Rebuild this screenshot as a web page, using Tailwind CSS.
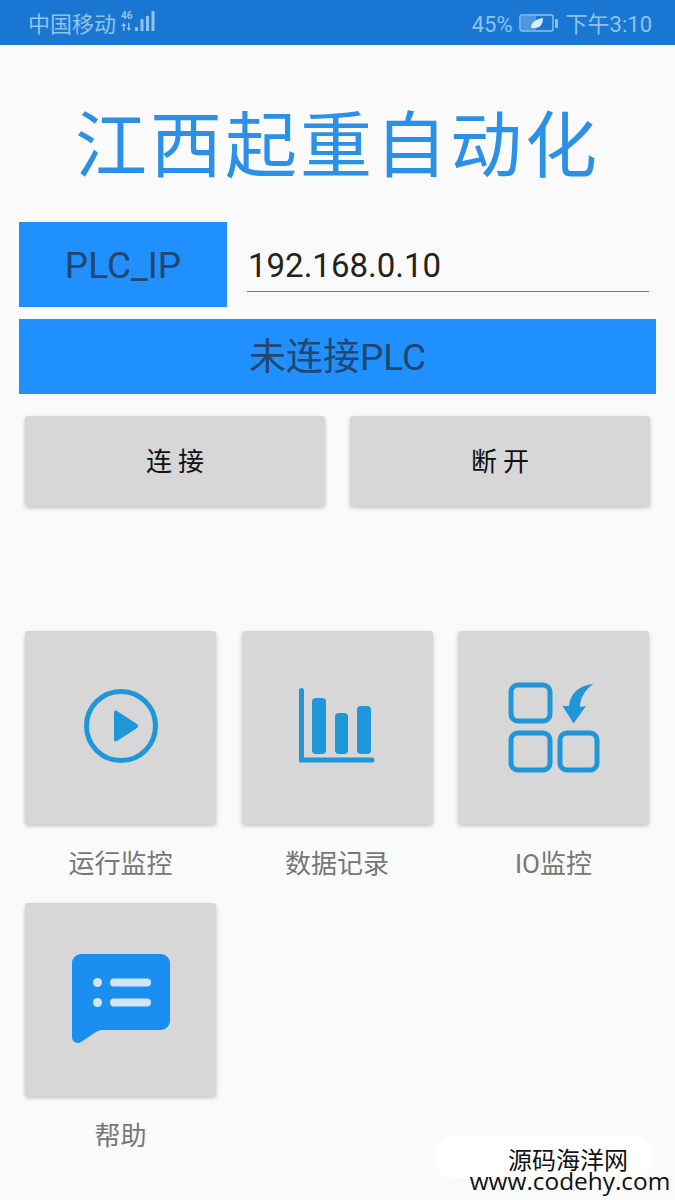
<!DOCTYPE html>
<html lang="zh">
<head>
<meta charset="utf-8">
<script src="https://cdn.jsdelivr.net/npm/@tailwindcss/browser@4"></script>
</head>
<body class="m-0">
<div class="relative w-[675px] h-[1200px] overflow-hidden bg-[#fafafa] font-['Roboto','Noto_Sans_CJK_SC',sans-serif]">
  <div class="h-[45px] bg-[#1976d2] flex items-center justify-between pl-[28px] pr-[23px] pt-[3px] text-[#8fc3ee] text-[22px]">
    <div class="flex items-center gap-[5px]">
      <span>中国移动</span>
      <svg class="mt-[-3px]" width="34" height="24" viewBox="0 0 34 24" fill="#8fc3ee">
        <text x="0" y="8" font-size="10" font-weight="700" font-family="Roboto">46</text>
        <path d="M2 13h1.500v7H2zM0 15l2.700-3 2.700 3zM7 12h1.500v6H7zM5.500 17h4.500l-2.200 3z"/>
        <rect x="14" y="16" width="3" height="4"/><rect x="19.500" y="8" width="3" height="12"/><rect x="25" y="5" width="3" height="15"/><rect x="30.500" y="0" width="3" height="20"/>
      </svg>
    </div>
    <div class="flex items-center">
      <span>45%</span>
      <svg class="ml-[6px] mr-[8px] mt-[-2px]" width="39" height="20" viewBox="0 0 39 20">
        <rect x="1" y="2" width="33" height="16" rx="2" fill="none" stroke="#8fc3ee" stroke-width="1.4"/>
        <rect x="2" y="3" width="15" height="14" fill="#8fc3ee" fill-opacity=".45"/>
        <rect x="36" y="6" width="3" height="9" rx="1" fill="#8fc3ee"/>
        <path d="M12 15c0-6 5-9 12-10 0 6-3 10-8 10z" fill="#dcecf8"/>
      </svg>
      <span>下午3:10</span>
    </div>
  </div>

  <h1 class="mt-[59px] text-center text-[#2b90e8] text-[72px] leading-[86px] tracking-[3px] font-normal">江西起重自动化</h1>

  <div class="mt-[32px] flex pl-[19px] pr-[26px]">
    <div class="w-[208px] h-[85px] pt-[2px] bg-[#2090ff] flex items-center justify-center text-[#24466c] text-[37px]">PLC_IP</div>
    <div class="ml-[20px] flex-1 h-[70px] border-b border-[#777777] flex items-center pl-[1px] pt-[18px] text-[#222222] text-[33px]">192.168.0.10</div>
  </div>

  <div class="mt-[12px] mx-[19px] h-[75px] pt-[2px] bg-[#2090ff] flex items-center justify-center text-[#24466c] text-[37px]">未连接PLC</div>

  <div class="mt-[22px] mx-[25px] flex justify-between">
    <button class="w-[300px] h-[90px] rounded-[3px] bg-[#d7d7d7] shadow-[0_2px_4px_rgba(0,0,0,0.22)] text-[#111111] text-[26px] tracking-[6px] pl-[6px] pt-[2px]">连接</button>
    <button class="w-[300px] h-[90px] rounded-[3px] bg-[#d7d7d7] shadow-[0_2px_4px_rgba(0,0,0,0.22)] text-[#111111] text-[26px] tracking-[6px] pl-[6px] pt-[2px]">断开</button>
  </div>

  <div class="mt-[125px] ml-[25px] grid grid-cols-[191px_191px_191px] gap-x-[25.500px] gap-y-[23px]">
    <div class="flex flex-col items-center">
      <div class="w-[191px] h-[193px] rounded-[3px] bg-[#d7d7d7] shadow-[0_2px_4px_rgba(0,0,0,0.22)] flex items-center justify-center">
        <svg width="74" height="74" viewBox="0 0 74 74" class="mt-[-3px]">
          <circle cx="37" cy="37" r="34.500" fill="none" stroke="#1f96d8" stroke-width="5"/>
          <path d="M30 23.500c0-2 1.500-2.500 3-1.500l20 13c1.500 1 1.500 3 0 4l-20 13c-1.500 1-3 .5-3-1.500z" fill="#1f96d8"/>
        </svg>
      </div>
      <div class="mt-[25px] h-[31px] leading-[31px] text-[#777777] text-[26px]">运行监控</div>
    </div>
    <div class="flex flex-col items-center">
      <div class="w-[191px] h-[193px] rounded-[3px] bg-[#d7d7d7] shadow-[0_2px_4px_rgba(0,0,0,0.22)] flex items-center justify-center">
        <svg width="76" height="76" viewBox="0 0 76 76" class="mt-[-3px]">
          <path d="M2.500 2.500V72H73" fill="none" stroke="#1f96d8" stroke-width="5" stroke-linecap="round"/>
          <rect x="13" y="10" width="14" height="56" rx="4" fill="#1f96d8"/>
          <rect x="36" y="25" width="13" height="41" rx="4" fill="#1f96d8"/>
          <rect x="58" y="18" width="14" height="48" rx="4" fill="#1f96d8"/>
        </svg>
      </div>
      <div class="mt-[25px] h-[31px] leading-[31px] text-[#777777] text-[26px]">数据记录</div>
    </div>
    <div class="flex flex-col items-center">
      <div class="w-[191px] h-[193px] rounded-[3px] bg-[#d7d7d7] shadow-[0_2px_4px_rgba(0,0,0,0.22)] flex items-center justify-center">
        <svg width="92" height="92" viewBox="0 0 92 92" class="mt-[-2px]">
          <g fill="none" stroke="#1f96d8" stroke-width="5">
            <rect x="3" y="4" width="39" height="36" rx="7"/>
            <rect x="3" y="52" width="39" height="37" rx="7"/>
            <rect x="52" y="52" width="37" height="37" rx="7"/>
          </g>
          <path d="M85.500 3C72 4 62 12 61 25H54.500L65.500 42.500 78 25 72 26C72 17 77 9 85.500 3z" fill="#1f96d8"/>
        </svg>
      </div>
      <div class="mt-[25px] h-[31px] leading-[31px] text-[#777777] text-[26px]">IO监控</div>
    </div>
    <div class="flex flex-col items-center">
      <div class="w-[191px] h-[193px] rounded-[3px] bg-[#d7d7d7] shadow-[0_2px_4px_rgba(0,0,0,0.22)] flex items-center justify-center">
        <svg width="98" height="90" viewBox="0 0 98 90" class="mt-[-2px]">
          <path d="M9 0h80a9 9 0 0 1 9 9v58a9 9 0 0 1-9 9H30q-3 0-6 2L9 88c-4 2.500-9 0-9-5V9a9 9 0 0 1 9-9z" fill="#1a8ff0"/>
          <circle cx="25.500" cy="28.500" r="4.500" fill="#cfe6f8"/>
          <circle cx="25.500" cy="48.500" r="4.500" fill="#cfe6f8"/>
          <rect x="38" y="24.500" width="41" height="8" rx="4" fill="#cfe6f8"/>
          <rect x="38" y="44.500" width="41" height="8" rx="4" fill="#cfe6f8"/>
        </svg>
      </div>
      <div class="mt-[25px] h-[31px] leading-[31px] text-[#777777] text-[26px]">帮助</div>
    </div>
  </div>

  <div class="absolute left-[435px] top-[1135px] w-[218px] h-[44px] rounded-[20px] bg-white"></div>
  <div class="absolute left-[450px] top-[1148px] w-[240px] text-center text-[#111111]">
    <div class="h-[22px] pr-[4px] text-[24px] leading-[22px] font-['Noto_Sans_CJK_SC',sans-serif]">源码海洋网</div>
    <div class="h-[22px] text-[24.400px] leading-[22px] whitespace-nowrap font-['Open_Sans',sans-serif]">www.codehy.com</div>
  </div>
</div>
</body>
</html>
